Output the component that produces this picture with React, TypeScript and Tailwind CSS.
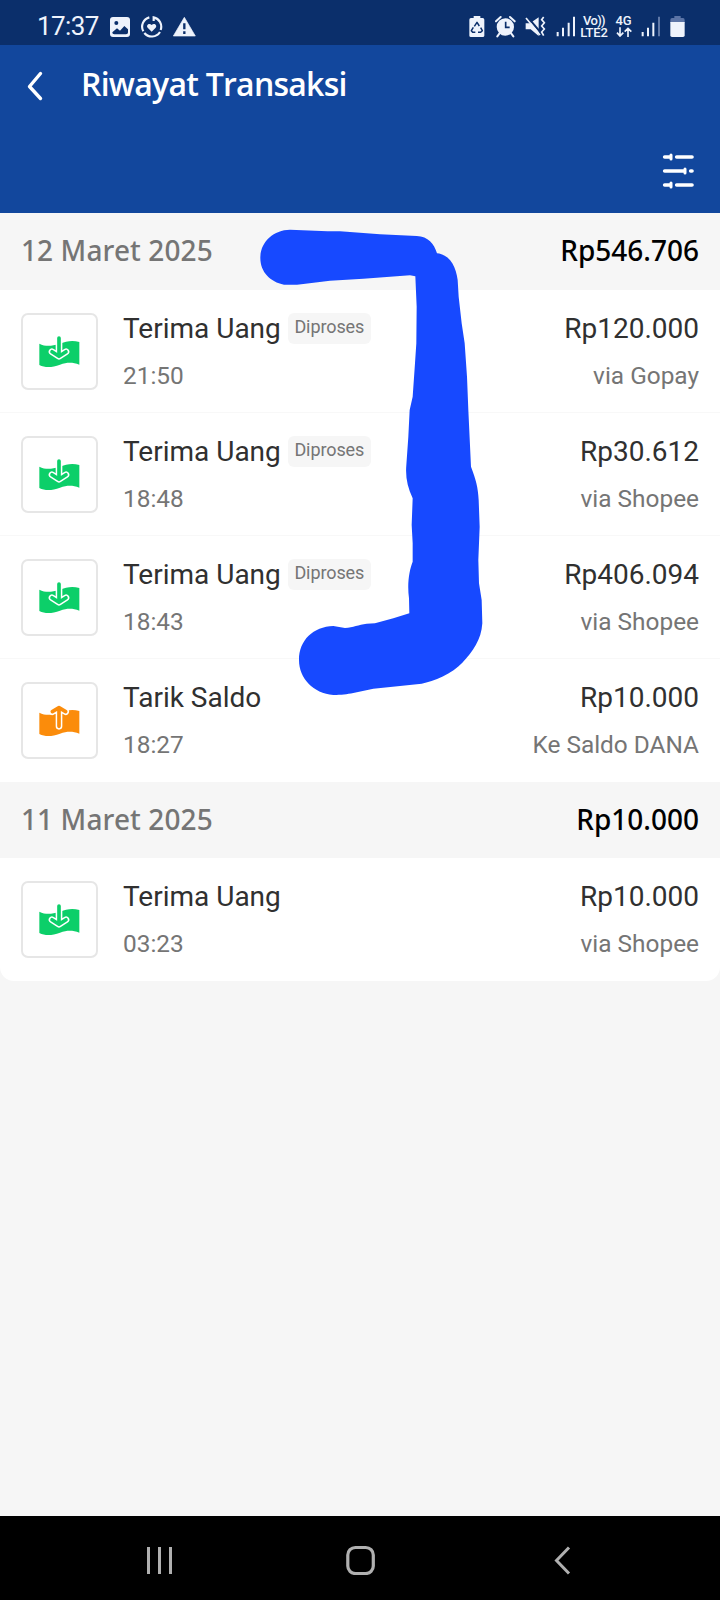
type Transaction = {
  title: string
  time: string
  amount: string
  note: string
  kind: 'in' | 'out'
  pending?: boolean
}

type Group = {
  date: string
  total: string
  items: Transaction[]
}

const groups: Group[] = [
  {
    date: '12 Maret 2025',
    total: 'Rp546.706',
    items: [
      { title: 'Terima Uang', time: '21:50', amount: 'Rp120.000', note: 'via Gopay', kind: 'in', pending: true },
      { title: 'Terima Uang', time: '18:48', amount: 'Rp30.612', note: 'via Shopee', kind: 'in', pending: true },
      { title: 'Terima Uang', time: '18:43', amount: 'Rp406.094', note: 'via Shopee', kind: 'in', pending: true },
      { title: 'Tarik Saldo', time: '18:27', amount: 'Rp10.000', note: 'Ke Saldo DANA', kind: 'out' },
    ],
  },
  {
    date: '11 Maret 2025',
    total: 'Rp10.000',
    items: [{ title: 'Terima Uang', time: '03:23', amount: 'Rp10.000', note: 'via Shopee', kind: 'in' }],
  },
]

function StatusBar() {
  return (
    <div className="flex h-[45px] items-start bg-[#0b2f6b] pt-[15px] text-[#eef3fc]">
      <span className="ml-[37px] w-[73px] text-[26px] leading-[22px] tracking-[-0.6px]">17:37</span>
      <svg className="h-[23px] w-[20px]" viewBox="330 45 60 69" fill="none">
        <rect x="330" y="51" width="60" height="60" rx="9" fill="currentColor" />
        <circle cx="349" cy="69" r="6" fill="#0b2f6b" />
        <path d="M337 97l14-12 9 7 13-14 11 10v9c0 4-2 6-6 6h-35c-4 0-6-2-6-6z" fill="#0b2f6b" />
      </svg>
      <svg className="ml-[10px] h-[23px] w-[23px]" viewBox="421 45 69 69" fill="none">
        <path
          d="M462 63V52a29 29 0 0 1 21 38M481 96a29 29 0 0 1-47 3M431 94a29 29 0 0 1 18-42"
          stroke="currentColor"
          strokeWidth="6.5"
        />
        <path d="M456 95l-12-12c-6-8 5-16 12-8 7-8 18 0 12 8z" fill="currentColor" />
      </svg>
      <svg className="ml-[10px] h-[23px] w-[23px]" viewBox="518 45 69 69" fill="none">
        <path d="M552 52l33 56h-66z" fill="currentColor" stroke="currentColor" strokeWidth="2" strokeLinejoin="round" />
        <path d="M552 70v18M552 94v8" stroke="#0b2f6b" strokeWidth="7" />
      </svg>

      <svg className="ml-[273px] h-[23px] w-[16px]" viewBox="56 45 48 69" fill="none">
        <path d="M70 48h20v6h7q5 0 5 5v48q0 4-5 4H62q-5 0-5-4V59q0-5 5-5h8z" fill="currentColor" />
        <path d="M72 79l8-12 7 11M91 83l5 9-5 5H83M75 97h-8l-4-5 6-10" stroke="#0b2f6b" strokeWidth="4.5" strokeLinejoin="round" />
      </svg>
      <svg className="ml-[10px] h-[23px] w-[21px]" viewBox="134 45 63 69" fill="none">
        <circle cx="165" cy="81" r="26" fill="currentColor" />
        <path d="M137 64l14-13M193 64l-14-13M147 101l-6 8M183 101l6 8" stroke="currentColor" strokeWidth="6" strokeLinecap="round" />
        <path d="M166 65v17h12" stroke="#0b2f6b" strokeWidth="5" />
      </svg>
      <svg className="ml-[9px] h-[23px] w-[21px]" viewBox="225 45 63 69" fill="none">
        <path d="M227 70h13l26-18v56l-24-20h-15z" fill="currentColor" />
        <path d="M231 49l42 50" stroke="#0b2f6b" strokeWidth="6" />
        <path d="M228 54l42 51" stroke="currentColor" strokeWidth="5" />
        <path d="M281 51l-6 8 8 9-8 10 8 9-8 9 6 11" stroke="currentColor" strokeWidth="5" />
      </svg>
      <svg className="ml-[10px] h-[23px] w-[20px]" viewBox="318 45 60 69" fill="none" stroke="currentColor" strokeWidth="6">
        <path d="M323 96v13M339 83v26M356 68v41M372 50v59" />
      </svg>
      <div className="ml-[4px] flex w-[28px] flex-col items-center font-['Roboto'] text-[13px] leading-[12px] font-medium">
        <span className="tracking-[-0.7px]">Vo))</span>
        <span className="tracking-[-0.2px]">LTE2</span>
      </div>
      <div className="ml-[7px] flex w-[17px] flex-col items-center text-[13px] leading-[12px] font-medium">
        <span>4G</span>
        <svg className="h-[10px] w-[16px]" viewBox="495 80 48 30" fill="none" stroke="currentColor" strokeWidth="5">
          <path d="M507 81v25M498 97l9 10 10-10M531 110V85M521 94l10-10 10 10" />
        </svg>
      </div>
      <svg className="ml-[9px] h-[23px] w-[20px]" viewBox="573 45 60 69" fill="none" stroke="currentColor" strokeWidth="6">
        <path d="M578 96v13M594 83v26M610 68v41" />
        <path d="M627 50v59" stroke="#6079a8" />
      </svg>
      <svg className="ml-[9px] h-[23px] w-[15px]" viewBox="659 45 45 69" fill="none">
        <path d="M672 48h19v6h7q5 0 5 6v9h-43v-9q0-6 5-6h7z" fill="#5b74a6" />
        <path d="M660 66h43v40q0 5-5 5h-33q-5 0-5-5z" fill="currentColor" />
      </svg>
    </div>
  )
}

function Header() {
  return (
    <header className="flex h-[168px] flex-col justify-between bg-[#12479d] text-white">
      <div className="flex items-center pt-[18px]">
        <svg className="mt-[3px] ml-[26px] h-[30px] w-[17px]" viewBox="0 0 17 30" fill="none">
          <path d="M14.5 2.5L3.5 15.5l11 12" stroke="currentColor" strokeWidth="3.4" strokeLinecap="round" strokeLinejoin="round" />
        </svg>
        <h1 className="ml-[38px] font-['Open_Sans'] text-[32px] leading-[42px] font-semibold tracking-[-0.75px]">
          Riwayat Transaksi
        </h1>
      </div>
      <svg className="mr-[25px] mb-[24px] h-[36px] w-[33px] self-end" viewBox="186 69 99 108" fill="none" stroke="currentColor" strokeLinecap="round">
        <path d="M194 81h16M230 81h46M194 123h57M272 123h4M194 165h16M230 165h46" strokeWidth="11" />
        <path d="M213 75v12M255 117v12M213 159v12" strokeWidth="9" />
      </svg>
    </header>
  )
}

function MoneyIcon({ kind }: { kind: 'in' | 'out' }) {
  const color = kind === 'in' ? '#0ccf69' : '#fb8c0b'
  const arrow = kind === 'in' ? 'M178 382v54M157 423l21 14 21-14' : 'M178 386v54M158 396l20-12 20 12'
  return (
    <svg
      className="mt-[1px] mr-[2px] h-[36px] w-[42px]"
      viewBox="115 370 126 108"
      fill="none"
      strokeLinecap="round"
      strokeLinejoin="round"
    >
      <path d="M119 399c18 9 36 8 59 1 25-10 42-11 61-6v68c-20-7-35-8-58 0-24 9-44 10-62 1z" fill={color} />
      <path d={arrow} stroke="#fff" strokeWidth="20" />
      <path d={arrow} stroke={color} strokeWidth="11" />
    </svg>
  )
}

function TransactionRow({ item, last }: { item: Transaction; last: boolean }) {
  return (
    <li
      className={`flex h-[123px] items-start bg-white pt-[23px] pr-[21px] pl-[21px] font-['Roboto'] ${
        last ? '' : 'border-b border-[#f8f8f8]'
      }`}
    >
      <div className="flex size-[77px] shrink-0 items-center justify-center rounded-[7px] border-2 border-[#e6e6e6]">
        <MoneyIcon kind={item.kind} />
      </div>
      <div className="ml-[25px] flex h-[77px] flex-col justify-between">
        <div className="flex h-8 items-start">
          <span className="text-[28px] leading-8 text-[#303030]">{item.title}</span>
          {item.pending && (
            <span className="ml-[7px] flex h-[31px] w-[83px] items-center justify-center rounded-[6px] bg-[#f6f6f6] pb-[3px] text-[18px] tracking-[-0.1px] text-[#757575]">
              Diproses
            </span>
          )}
        </div>
        <span className="text-[24.4px] leading-7 text-[#757575]">{item.time}</span>
      </div>
      <div className="ml-auto flex h-[77px] flex-col items-end justify-between">
        <span className="text-[28px] leading-8 text-[#303030]">{item.amount}</span>
        <span className="text-[24.4px] leading-7 text-[#757575]">{item.note}</span>
      </div>
    </li>
  )
}

// freehand marker stroke lying over the list
function MarkerStroke() {
  return (
    <svg className="pointer-events-none absolute top-[210px] left-[230px] h-[500px] w-[270px]" viewBox="0 0 810 1500">
      <path
        fill="#1749ff"
        d="M180 59C230 60 280 64 330 64L450 73 560 78C595 80 612 100 621 130C660 134 678 170 683 210L686 260 695 340 704 400 711 500 715 600 723 770C738 810 744 830 746 870L749 950 745 1050 747 1120 755 1170 757 1240C754 1290 728 1325 697 1358C668 1390 610 1414 575 1421L510 1428 430 1436 370 1449C350 1453 335 1455 310 1455C250 1450 207 1405 207 1350C207 1290 250 1250 310 1248L345 1254C370 1252 385 1244 410 1241L435 1240 490 1225 538 1210 537 1165C531 1120 538 1080 548 1055L548 1000 545 945 548 865C532 830 526 800 529 765L535 680 539 600 548 560 555 460 559 400 560 290 556 199 540 196 470 201 400 206 300 212 220 222C200 225 180 225 162 224C120 216 90 185 91 142C92 95 130 60 180 59Z"
      />
    </svg>
  )
}

function NavBar() {
  return (
    <nav className="flex h-[84px] items-center bg-black pt-[3px] pl-[146px] text-[#b0b0b0]">
      <svg className="h-[30px] w-[28px]" viewBox="0 0 28 30" stroke="currentColor" strokeWidth="3">
        <path d="M2.5 2v27M13.5 2v27M24.5 2v27" />
      </svg>
      <svg className="ml-[172px] h-[30px] w-[30px]" viewBox="0 0 30 30" fill="none">
        <rect x="1.8" y="2.5" width="25.5" height="26" rx="7.5" stroke="currentColor" strokeWidth="3.2" />
      </svg>
      <svg className="ml-[177px] h-[30px] w-[18px]" viewBox="0 0 18 30" fill="none">
        <path d="M16 2.5L3.5 15.5l12.5 13" stroke="currentColor" strokeWidth="3" />
      </svg>
    </nav>
  )
}

export default function App() {
  return (
    <div className="relative flex h-[1600px] w-[720px] flex-col overflow-hidden bg-[#f6f6f6] font-['Roboto',sans-serif]">
      <StatusBar />
      <Header />
      <main className="flex-1">
        <div className="overflow-hidden rounded-b-[14px]">
          {groups.map((group) => (
            <section key={group.date}>
              <div className="flex h-[76.6px] items-center justify-between bg-[#f6f6f6] px-[21px] pb-[2.2px] font-['Noto_Sans'] text-[28px] font-medium">
                <h2 className="tracking-[0.1px] text-[#757575]">{group.date}</h2>
                <span className="text-black">{group.total}</span>
              </div>
              <ul>
                {group.items.map((item, i) => (
                  <TransactionRow key={item.time} item={item} last={i === group.items.length - 1} />
                ))}
              </ul>
            </section>
          ))}
        </div>
      </main>
      <NavBar />
      <MarkerStroke />
    </div>
  )
}
